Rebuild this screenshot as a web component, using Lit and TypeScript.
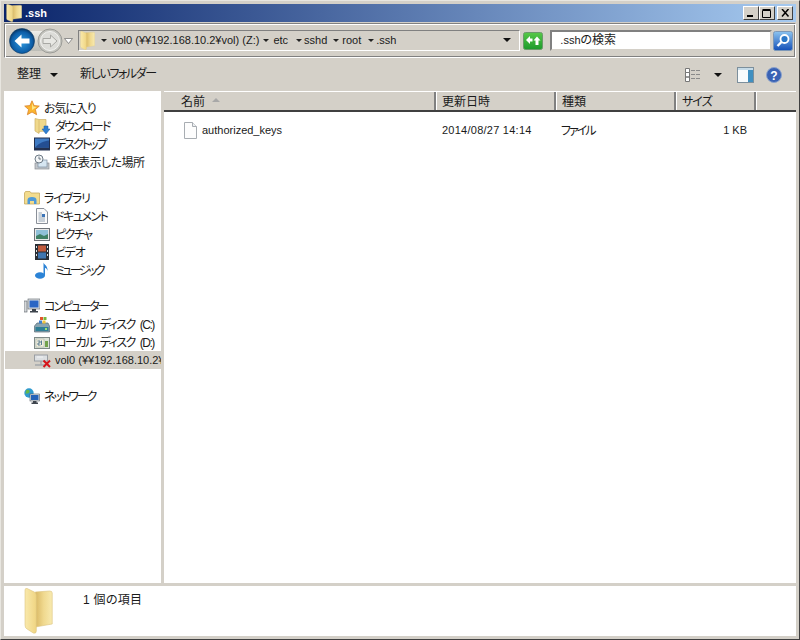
import { LitElement, html, css } from "lit";
import { customElement } from "lit/decorators.js";

const folder = (w: number, h: number, shadow = false) => html`<svg width=${w} height=${h} viewBox="0 0 ${shadow ? 38 : 28} 46" preserveAspectRatio="none">
  <defs>
    <linearGradient id="fg" x1="0" y1="0" x2="1" y2="0"><stop offset="0" stop-color="#f9e9ac"/><stop offset="1" stop-color="#f0d582"/></linearGradient>
    <linearGradient id="fb" x1="0" y1="0" x2="1" y2="0"><stop offset="0" stop-color="#d9b864"/><stop offset=".5" stop-color="#f0d98f"/><stop offset="1" stop-color="#f8eab0"/></linearGradient>
    <linearGradient id="fs" x1="0" y1="0" x2="1" y2="0"><stop offset="0" stop-color="#9aa0a6" stop-opacity=".55"/><stop offset="1" stop-color="#c8ccd0" stop-opacity="0"/></linearGradient>
  </defs>
  ${shadow ? html`<path d="M26 24 L37 36 L36 39 L14 42 Z" fill="url(#fs)"/>` : ""}
  <path d="M11 4 L25 3 Q27.500 3 27.500 5 L27.500 36 L11 39Z" fill="url(#fb)" stroke="#dcc47e" stroke-width=".6"/>
  <path d="M1 2 Q1 0 3 .5 L10 4 Q12 5 12 7 L12 43 Q12 46 9 45 L3 41 Q1 40 1 37Z" fill="url(#fg)" stroke="#dcc47e" stroke-width=".6"/>
  ${shadow ? html`<path d="M25.500 22V33" stroke="#b8c070" stroke-width="1.500"/>` : ""}
</svg>`;

const icons: Record<string, unknown> = {
  star: html`<svg width="16" height="16" viewBox="0 0 16 16"><path d="M8 .8 10.100 5.600 15.300 6.100 11.400 9.500 12.600 14.700 8 12 3.400 14.700 4.600 9.500.7 6.100 5.900 5.600Z" fill="#fbb52e" stroke="#d9822b" stroke-width=".8"/><path d="M8 3 9.400 6.600 12.600 7 8 10Z" fill="#fde588"/></svg>`,
  download: html`<svg width="16" height="16" viewBox="0 0 16 16"><path d="M1 .5 5 1.500 12 1.500V13L5 13.500V15.500L1 13Z" fill="#f0d98c" stroke="#cdb065" stroke-width=".7"/><path d="M5 1.500V15" stroke="#dcbf72"/><path d="M10 8H14V11H16L12 16 8 11H10Z" fill="#2f7fd0" stroke="#1c5fa8" stroke-width=".5"/></svg>`,
  desktop: html`<svg width="16" height="16" viewBox="0 0 16 16"><rect x="0" y="1.500" width="16" height="13" fill="#23304f"/><rect x="1" y="2.500" width="14" height="9" fill="#3f7bc4"/><path d="M1 11.500C5 7 10 5 15 4.500V11.500Z" fill="#244e92"/></svg>`,
  recent: html`<svg width="16" height="16" viewBox="0 0 16 16"><rect x="1" y="9" width="14" height="6" fill="#c2c6cb" stroke="#8a8f96" stroke-width=".7"/><rect x="4" y="6" width="9" height="7" fill="#d6e6f2" stroke="#7d8ea0" stroke-width=".7"/><circle cx="5" cy="5" r="4" fill="#f4f6f7" stroke="#6d7a86"/><path d="M5 2.500V5H7" stroke="#4c5a68" fill="none" stroke-width=".8"/></svg>`,
  library: html`<svg width="16" height="16" viewBox="0 0 16 16"><path d="M.5 4V14H15.500V3H7L6 1.500H1.500L.5 3Z" fill="#f3dc8e" stroke="#c8a95e" stroke-width=".8"/><path d="M3.500 14V10Q3.500 7 8 7T12.500 10V14H10V11H6V14Z" fill="#4f9ad8"/></svg>`,
  doc: html`<svg width="16" height="16" viewBox="0 0 16 16"><path d="M2.500.5H10L13.500 4V15.500H2.500Z" fill="#fafafa" stroke="#8a9099"/><path d="M4.500 5H8M4.500 7H11M4.500 9H11M4.500 11H11M4.500 13H11" stroke="#7c8fa3" stroke-width=".8"/><rect x="8" y="6" width="3" height="3" fill="#3c74b8"/></svg>`,
  picture: html`<svg width="16" height="16" viewBox="0 0 16 16"><rect x=".5" y="2.500" width="15" height="12" fill="#e8e8e8" stroke="#6d7278"/><rect x="2" y="4" width="12" height="9" fill="#8fc0d8"/><path d="M2 10 6 8 10 10 14 8V13H2Z" fill="#3f8065"/></svg>`,
  video: html`<svg width="16" height="16" viewBox="0 0 16 16"><rect x="1" y="0" width="14" height="16" fill="#2a2f36"/><rect x="4" y="1.500" width="8" height="6" fill="#c05a3c"/><rect x="4" y="8.500" width="8" height="6" fill="#3f76b0"/><path d="M2 2h1v2H2zM2 6h1v2H2zM2 10h1v2H2zM13 2h1v2h-1zM13 6h1v2h-1zM13 10h1v2h-1z" fill="#dfe3e6"/></svg>`,
  music: html`<svg width="16" height="17" viewBox="0 0 16 17"><ellipse cx="6" cy="13.500" rx="5" ry="3.200" fill="#2c83d6"/><path d="M9.500 13V.5C10.500 3 14 4 13.500 9 13 6.500 11.500 6 11 6V13Z" fill="#2c83d6"/></svg>`,
  computer: html`<svg width="16" height="16" viewBox="0 0 16 16"><rect x="0" y="3" width="3" height="11" fill="#d5d8da" stroke="#555c63" stroke-width=".6"/><rect x="4" y="1" width="12" height="10" fill="#dde0e3" stroke="#555c63" stroke-width=".6"/><rect x="5.500" y="2.500" width="9" height="7" fill="#2a66c4"/><path d="M8 11h4v2h2v1.500H6V13h2Z" fill="#3e454d"/></svg>`,
  driveC: html`<svg width="16" height="17" viewBox="0 0 16 17"><path d="M.5 10 3 7H14L15.500 10V16H.5Z" fill="#8aa4b0" stroke="#566a76" stroke-width=".7"/><rect x="1.500" y="11" width="13" height="4" fill="#2f7f96"/><rect x="11" y="12" width="2" height="2" fill="#9fe070"/><rect x="6" y="1" width="3" height="3" fill="#e2542c"/><rect x="9.500" y="1" width="3" height="3" fill="#7ab740"/><rect x="5" y="4.500" width="3" height="3" fill="#3e7fd0"/><rect x="8.500" y="4.500" width="3" height="3" fill="#f2c33a"/></svg>`,
  driveD: html`<svg width="16" height="13" viewBox="0 0 16 13"><rect x=".5" y="1.500" width="15" height="11" fill="#dce3d8" stroke="#7f8a88"/><rect x="2" y="3" width="8" height="8" fill="#f4f1de" stroke="#9aa59a" stroke-width=".5"/><path d="M3.500 5H6V7H4V9H6.500M7.500 4.500V9" stroke="#48708a" fill="none" stroke-width=".9"/><rect x="11" y="5" width="3" height="6" fill="#72a24c"/></svg>`,
  netdrive: html`<svg width="17" height="16" viewBox="0 0 17 16"><rect x=".5" y="3" width="13" height="6" fill="#dcdfe2" stroke="#9a9ea3"/><rect x="3" y="4.500" width="6" height="1" fill="#f2f3f4"/><path d="M7 9V13M1 13H12" stroke="#a2a6aa" stroke-width="1.300"/><path d="M9.500 8.500 16 15M16 8.500 9.500 15" stroke="#d6141a" stroke-width="2"/></svg>`,
  network: html`<svg width="16" height="16" viewBox="0 0 16 16"><circle cx="5" cy="5" r="4.700" fill="#2f9ad0"/><path d="M2 2.500C4 1 6 2 5.500 4S2.500 5 1.500 6ZM6 6C8 5.500 9 7 8 8.500S6 9.500 6 6Z" fill="#66b84a"/><rect x="6" y="6" width="9.500" height="7" fill="#dfe3e6" stroke="#4f5861" stroke-width=".6"/><rect x="7" y="7" width="7.500" height="5" fill="#2562b8"/><path d="M9 13h3.500v1.500H14V16H7.500V14.500H9Z" fill="#3e454d"/></svg>`,
};

const nav: [string, string, number][][] = [
  [["star", "お気に入り", -1.1], ["download", "ダウンロード", -1.8], ["desktop", "デスクトップ", -2], ["recent", "最近表示した場所", -0.5]],
  [["library", "ライブラリ", -1.2], ["doc", "ドキュメント", -1.5], ["picture", "ピクチャ", -1.5], ["video", "ビデオ", -1.3], ["music", "ミュージック", -2.6]],
  [["computer", "コンピューター", -2], ["driveC", "ローカル ディスク (C:)", -1.5], ["driveD", "ローカル ディスク (D:)", -1.5], ["netdrive", "vol0 (¥¥192.168.10.2¥vol) (Z:)", 0]],
  [["network", "ネットワーク", -2]],
];

const crumbs: [string, number, number][] = [
  ["vol0 (¥¥192.168.10.2¥vol) (Z:)", 6, 5],
  ["etc", 4, 4],
  ["sshd", 8, 2],
  ["root", 6, 3],
  [".ssh", 7, 2],
];

@customElement("app-root")
export class AppRoot extends LitElement {
  static styles = css`
    :host {
      display: block;
      width: 800px;
      height: 640px;
      overflow: hidden;
      font-family: "Liberation Sans", "Noto Sans CJK JP", sans-serif;
      font-size: 12px;
      font-feature-settings: "palt";
      color: #1a1a1a;
    }
    svg { display: block; flex: none; }
    .win {
      box-sizing: border-box;
      width: 800px;
      height: 640px;
      background: #d4d0c8;
      border-style: solid;
      border-width: 1px;
      border-color: #e8e6e0 #404040 #404040 #e8e6e0;
      padding: 3px;
      display: flex;
      flex-direction: column;
    }
    .title {
      height: 18px;
      flex: none;
      background: linear-gradient(90deg, #0a246a, #a6caf0);
      display: flex;
      align-items: center;
      padding: 0 3px 0 2px;
      color: #fff;
      font-weight: bold;
      font-size: 11px;
    }
    .title .name { margin-left: 3px; flex: 1; }
    .wbtn {
      box-sizing: border-box;
      width: 16px;
      height: 14px;
      background: #d4d0c8;
      border: 1px solid;
      border-color: #fff #404040 #404040 #fff;
      display: flex;
      align-items: center;
      justify-content: center;
    }
    .wbtn.last { margin-left: 2px; }
    .addr {
      box-sizing: border-box;
      height: 35px;
      flex: none;
      margin-top: 1px;
      border: 1px solid #808080;
      border-right-color: #fff;
      border-bottom-color: #fff;
      box-shadow: inset 1px 1px 0 #fff, inset -1px -1px 0 #808080;
      display: flex;
      align-items: center;
      padding: 0 2px 0 4px;
    }
    .hist {
      width: 9px;
      height: 6px;
      margin: 0 5px 0 1px;
    }
    .path {
      box-sizing: border-box;
      width: 443px;
      height: 21px;
      margin-top: -1px;
      border: 1px solid;
      border-color: #808080 #fff #fff #808080;
      display: flex;
      align-items: center;
      padding-left: 1px;
      font-size: 11px;
    }
    .path .c { padding-bottom: 1px; }
    .tri {
      width: 0; height: 0; flex: none;
      border: 4px solid transparent;
      border-top: 4px solid #111;
      border-bottom: 0;
    }
    .tri.s { border-width: 3px 3px 0; border-color: #222 transparent transparent; }
    .tri.end { margin-right: 8px; }
    .spacer { flex: 1; }
    .refresh { margin-left: 3px; }
    .search {
      box-sizing: border-box;
      width: 222px;
      height: 21px;
      margin-left: 7px;
      background: #fff;
      border: 2px solid;
      border-color: #808080 #d4d0c8 #d4d0c8 #808080;
      padding-left: 8px;
      line-height: 16px;
    }
    .small { font-size: 11px; }
    .sbtn { margin-left: 1px; }
    .tools {
      height: 33px;
      flex: none;
      display: flex;
      align-items: center;
      padding: 0 14px 0 13px;
    }
    .tools .label { padding-bottom: 4px; }
    .tools .arrow { margin-left: 9px; }
    .tools .new { margin-left: 22px; letter-spacing: -1.4px; }
    .tools .view { margin-right: 13px; }
    .tools .pane { margin: 0 12px 0 15px; }
    .main { flex: 1; display: flex; min-height: 0; }
    .side {
      width: 157px;
      flex: none;
      background: #fff;
      padding-top: 8px;
      overflow: hidden;
      display: flex;
      flex-direction: column;
      gap: 18px;
    }
    .row {
      height: 18px;
      display: flex;
      align-items: center;
      white-space: nowrap;
      padding-left: 20px;
      overflow: hidden;
      word-spacing: 3px;
    }
    .row.child { padding-left: 30px; }
    .row .ic { width: 16px; display: flex; justify-content: center; margin-right: 4px; flex: none; }
    .row.child .ic { margin-right: 5px; }
    .row .lb { padding-bottom: 2px; }
    .row.sel { background: #d4d0c8; margin-left: 1px; padding-left: 29px; font-size: 11px; word-spacing: 0; }
    .row.sel .lb { padding-bottom: 0; }
    .split { width: 3px; flex: none; }
    .list { flex: 1; background: #fff; display: flex; flex-direction: column; min-width: 0; }
    .head {
      box-sizing: border-box;
      height: 21px;
      flex: none;
      display: flex;
      background: #d4d0c8;
      border-top: 1px solid #fff;
      border-bottom: 2px solid #404040;
    }
    .hc {
      box-sizing: border-box;
      display: flex;
      align-items: center;
      padding: 0 0 2px 6px;
      border-right: 2px solid #808080;
      box-shadow: 1px 0 0 #fff;
    }
    .hc.c1 { width: 272px; padding-left: 17px; }
    .hc.c2, .hc.c3 { width: 120px; }
    .hc.c4 { width: 80px; letter-spacing: -1px; }
    .sort {
      width: 0; height: 0;
      margin-left: 7px;
      border: 4px solid transparent;
      border-bottom: 4px solid #a8a8a8;
      border-top: 0;
    }
    .file {
      display: flex;
      align-items: center;
      height: 18px;
      margin-top: 9px;
    }
    .file .fi { margin-left: 20px; }
    .file .fname { width: 240px; margin-left: 5px; font-size: 11px; }
    .file .fdate { width: 119px; font-size: 11px; letter-spacing: .25px; }
    .file .ftype { width: 120px; padding-bottom: 1px; letter-spacing: -2px; }
    .file .fsize { width: 66px; text-align: right; font-size: 11px; }
    .status {
      height: 50px;
      flex: none;
      margin-top: 3px;
      background: #fff;
      display: flex;
      padding-left: 20px;
    }
    .status .t { margin: 6px 0 0 20px; line-height: 17px; letter-spacing: .3px; }
    .status svg { margin-top: 2px; }
  `;

  render() {
    return html`<div class="win">
      <div class="title">
        ${folder(16, 18)}
        <span class="name">.ssh</span>
        <span class="wbtn"><svg width="8" height="8"><rect x="0" y="6" width="6" height="2" fill="#000"/></svg></span>
        <span class="wbtn"><svg width="10" height="9"><path d="M.5 1.500H8.500V8.500H.5ZM.5.500H8.500" fill="none" stroke="#000"/></svg></span>
        <span class="wbtn last"><svg width="9" height="8"><path d="M1 0 7.500 7.500M7.500 0 1 7.500" stroke="#000" stroke-width="1.500"/></svg></span>
      </div>
      <div class="addr">
        <svg width="54" height="28" viewBox="0 0 54 28">
          <defs>
            <linearGradient id="pill" x1="0" y1="0" x2="0" y2="1"><stop offset="0" stop-color="#eeeeea"/><stop offset="1" stop-color="#bcbcb6"/></linearGradient>
            <radialGradient id="bk" cx=".5" cy=".55" r=".55"><stop offset="0" stop-color="#2f9ae0"/><stop offset=".75" stop-color="#0d5ea8"/><stop offset="1" stop-color="#08335f"/></radialGradient>
          </defs>
          <rect x="4" y="4" width="48" height="20" rx="10" fill="url(#pill)"/>
          <circle cx="41" cy="14" r="12" fill="#c4c4be" stroke="#9c9c98"/>
          <circle cx="41" cy="14" r="9.500" fill="#dcdcd8" stroke="#f2f2f0"/>
          <path d="M48 14 41.500 8V11.500H34V16.500H41.500V20Z" fill="#e8e8e4" stroke="#a8a8a4"/>
          <circle cx="13" cy="14" r="12.500" fill="url(#bk)" stroke="#0c3a66" stroke-width=".6"/>
          <path d="M5.500 14 12.500 7.500V11.500H20.500V16.500H12.500V20.500Z" fill="#fff"/>
        </svg>
        <svg class="hist" viewBox="0 0 9 6"><path d="M.5.5H8.500L4.500 5.500Z" fill="#fff" stroke="#777" stroke-width=".8"/></svg>
        <div class="path">
          ${folder(15, 19)}
          ${crumbs.map(([t, m, n]) => html`<span class="tri s" style="margin-left:${m}px"></span><span class="c" style="margin-left:${n}px">${t}</span>`)}
          <span class="spacer"></span>
          <span class="tri end"></span>
        </div>
        <svg class="refresh" width="20" height="18" viewBox="0 0 20 18">
          <defs><linearGradient id="gr" x1="0" y1="0" x2="0" y2="1"><stop offset="0" stop-color="#58c848"/><stop offset="1" stop-color="#1c9a2c"/></linearGradient></defs>
          <rect x=".5" y=".5" width="19" height="17" rx="2" fill="url(#gr)" stroke="#6a9a6a"/>
          <path d="M3 8 7 4V6.500H9.500V9.500H7V12ZM10.500 8.500 14 4.500 17.500 8.500H15.500V13H12.500V8.500Z" fill="#fff"/>
        </svg>
        <div class="search"><span class="small">.ssh</span>の検索</div>
        <svg class="sbtn" width="20" height="20" viewBox="0 0 20 20">
          <defs><linearGradient id="sb" x1="0" y1="0" x2="0" y2="1"><stop offset="0" stop-color="#8cc4f0"/><stop offset="1" stop-color="#1450b8"/></linearGradient></defs>
          <rect x=".5" y=".5" width="19" height="19" rx="2" fill="url(#sb)" stroke="#7d98b8"/>
          <circle cx="11.500" cy="8" r="4" fill="#2c78c8" stroke="#fff" stroke-width="1.800"/>
          <path d="M8.500 11 4.500 15" stroke="#fff" stroke-width="2.400"/>
        </svg>
      </div>
      <div class="tools">
        <span class="label">整理</span>
        <span class="tri arrow"></span>
        <span class="label new">新しいフォルダー</span>
        <span class="spacer"></span>
        <svg class="view" width="16" height="14" viewBox="0 0 16 14">
          <path d="M.5.500H4.500V4.500H.5ZM.5 4.500H4.500V9H.5ZM.5 9H4.500V13.500H.5Z" fill="#fff" stroke="#777"/>
          <path d="M6 2.500H15M6 6.500H15M6 10.500H15" stroke="#8a8a8a" stroke-dasharray="4 1"/>
        </svg>
        <span class="tri"></span>
        <svg class="pane" width="17" height="16" viewBox="0 0 17 16">
          <rect x=".5" y=".5" width="16" height="15" fill="#f8fbfc" stroke="#7c8f9c"/>
          <rect x="1" y="1" width="15" height="2" fill="#c6dbe8"/>
          <rect x="11" y="3" width="5" height="12" fill="#3f8fc0"/>
        </svg>
        <svg width="16" height="16" viewBox="0 0 16 16">
          <circle cx="8" cy="8" r="7.500" fill="#3a62b4" stroke="#8aa2cc"/>
          <text x="8" y="12.500" text-anchor="middle" font-family="Liberation Sans" font-weight="bold" font-size="12" fill="#fff">?</text>
        </svg>
      </div>
      <div class="main">
        <div class="side">
          ${nav.map((g) => html`<div>
            ${g.map(([ic, label, ls], i) => html`<div class="row ${i ? "child" : ""} ${ic === "netdrive" ? "sel" : ""}">
              <span class="ic">${icons[ic]}</span><span class="lb" style="letter-spacing:${ls}px">${label}</span>
            </div>`)}
          </div>`)}
        </div>
        <div class="split"></div>
        <div class="list">
          <div class="head">
            <div class="hc c1">名前<span class="sort"></span></div>
            <div class="hc c2">更新日時</div>
            <div class="hc c3">種類</div>
            <div class="hc c4">サイズ</div>
          </div>
          <div class="file">
            <svg class="fi" width="13" height="17" viewBox="0 0 13 17"><path d="M.5.500H8.500L12.500 4.500V16.500H.5Z" fill="#fdfdfd" stroke="#a8adb2"/><path d="M8.500.500V4.500H12.500" fill="#eef0f2" stroke="#a8adb2"/></svg>
            <span class="fname">authorized_keys</span>
            <span class="fdate">2014/08/27 14:14</span>
            <span class="ftype">ファイル</span>
            <span class="fsize">1 KB</span>
          </div>
        </div>
      </div>
      <div class="status">
        ${folder(39, 46, true)}
        <span class="t">1 個の項目</span>
      </div>
    </div>`;
  }
}
